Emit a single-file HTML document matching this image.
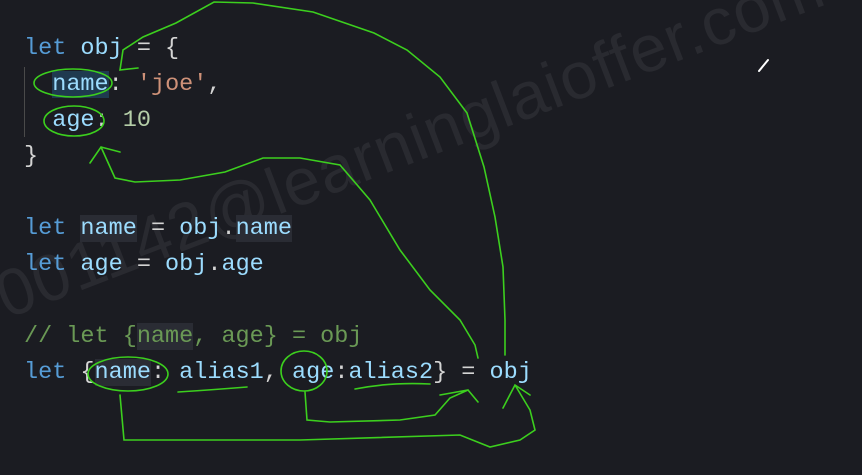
<!DOCTYPE html>
<html><head><meta charset="utf-8"><style>
html,body{margin:0;padding:0;background:#1b1c22;width:862px;height:475px;overflow:hidden}
.wm{position:absolute;left:-15px;top:262px;font:66px "Liberation Sans",sans-serif;color:#292a30;transform:rotate(-21deg);transform-origin:0 0;white-space:nowrap;letter-spacing:1px}
.code{position:absolute;left:24px;top:31px;font:23.5px/36px "Liberation Mono",monospace;color:#d4d4d4;white-space:pre}
.k{color:#569cd6}.v{color:#9cdcfe}.s{color:#ce9178}.n{color:#b5cea8}.c{color:#6a9955}
.hl{background:#1f3a4f}.hg{background:#2a2c34}
.bar{position:absolute;left:24px;top:67px;width:1px;height:70px;background:#4a4a4a}
svg{position:absolute;left:0;top:0}
</style></head><body>
<div class="wm">001142@learninglaioffer.com</div>
<div class="bar"></div>
<div class="code"><span class="k">let</span> <span class="v">obj</span> = {
  <span class="v hl">name</span>: <span class="s">'joe'</span>,
  <span class="v">age</span>: <span class="n">10</span>
}

<span class="k">let</span> <span class="v hg">name</span> = <span class="v">obj</span>.<span class="v hg">name</span>
<span class="k">let</span> <span class="v">age</span> = <span class="v">obj</span>.<span class="v">age</span>

<span class="c">// let {<span class="hg">name</span>, age} = obj</span>
<span class="k">let</span> {<span class="v hg">name</span>: <span class="v">alias1</span>, <span class="v">age</span>:<span class="v">alias2</span>} = <span class="v">obj</span></div>
<svg width="862" height="475" fill="none" stroke="#3ccf1e" stroke-width="1.6" stroke-linecap="round">
<path d="M138 68 L120 70 L123 50 L143 37 L176 23 L214 2 L253 3 L313 12 L374 33 L407 50 L440 77 L467 113 L484 167 L495 217 L503 267 L505 320 L505 355"/>
<path d="M90 163 L101 147 L120 152 M101 147 L115 178 L135 182 L180 180 L225 172 L263 158 L300 158 L340 165 L370 200 L400 250 L430 290 L460 320 L475 345 L478 358"/>
<ellipse cx="73" cy="83" rx="39" ry="14"/>
<ellipse cx="74" cy="121" rx="30" ry="15"/>
<ellipse cx="128" cy="374" rx="40" ry="17"/>
<ellipse cx="304" cy="371" rx="23" ry="20"/>
<path d="M178 392 Q210 390 247 387 M355 389 Q390 382 430 384"/>
<path d="M305 392 L307 420 L330 422 L400 420 L435 415 L450 398 L468 390 M440 395 L468 390 L478 402"/>
<path d="M120 395 L124 440 L300 440 L460 435 L490 447 L520 440 L535 430 L530 410 L518 390 L515 385 M503 408 L515 385 L530 395"/>
<path d="M768 60 L759 71" stroke="#fff" stroke-width="2"/>
</svg>
</body></html>
